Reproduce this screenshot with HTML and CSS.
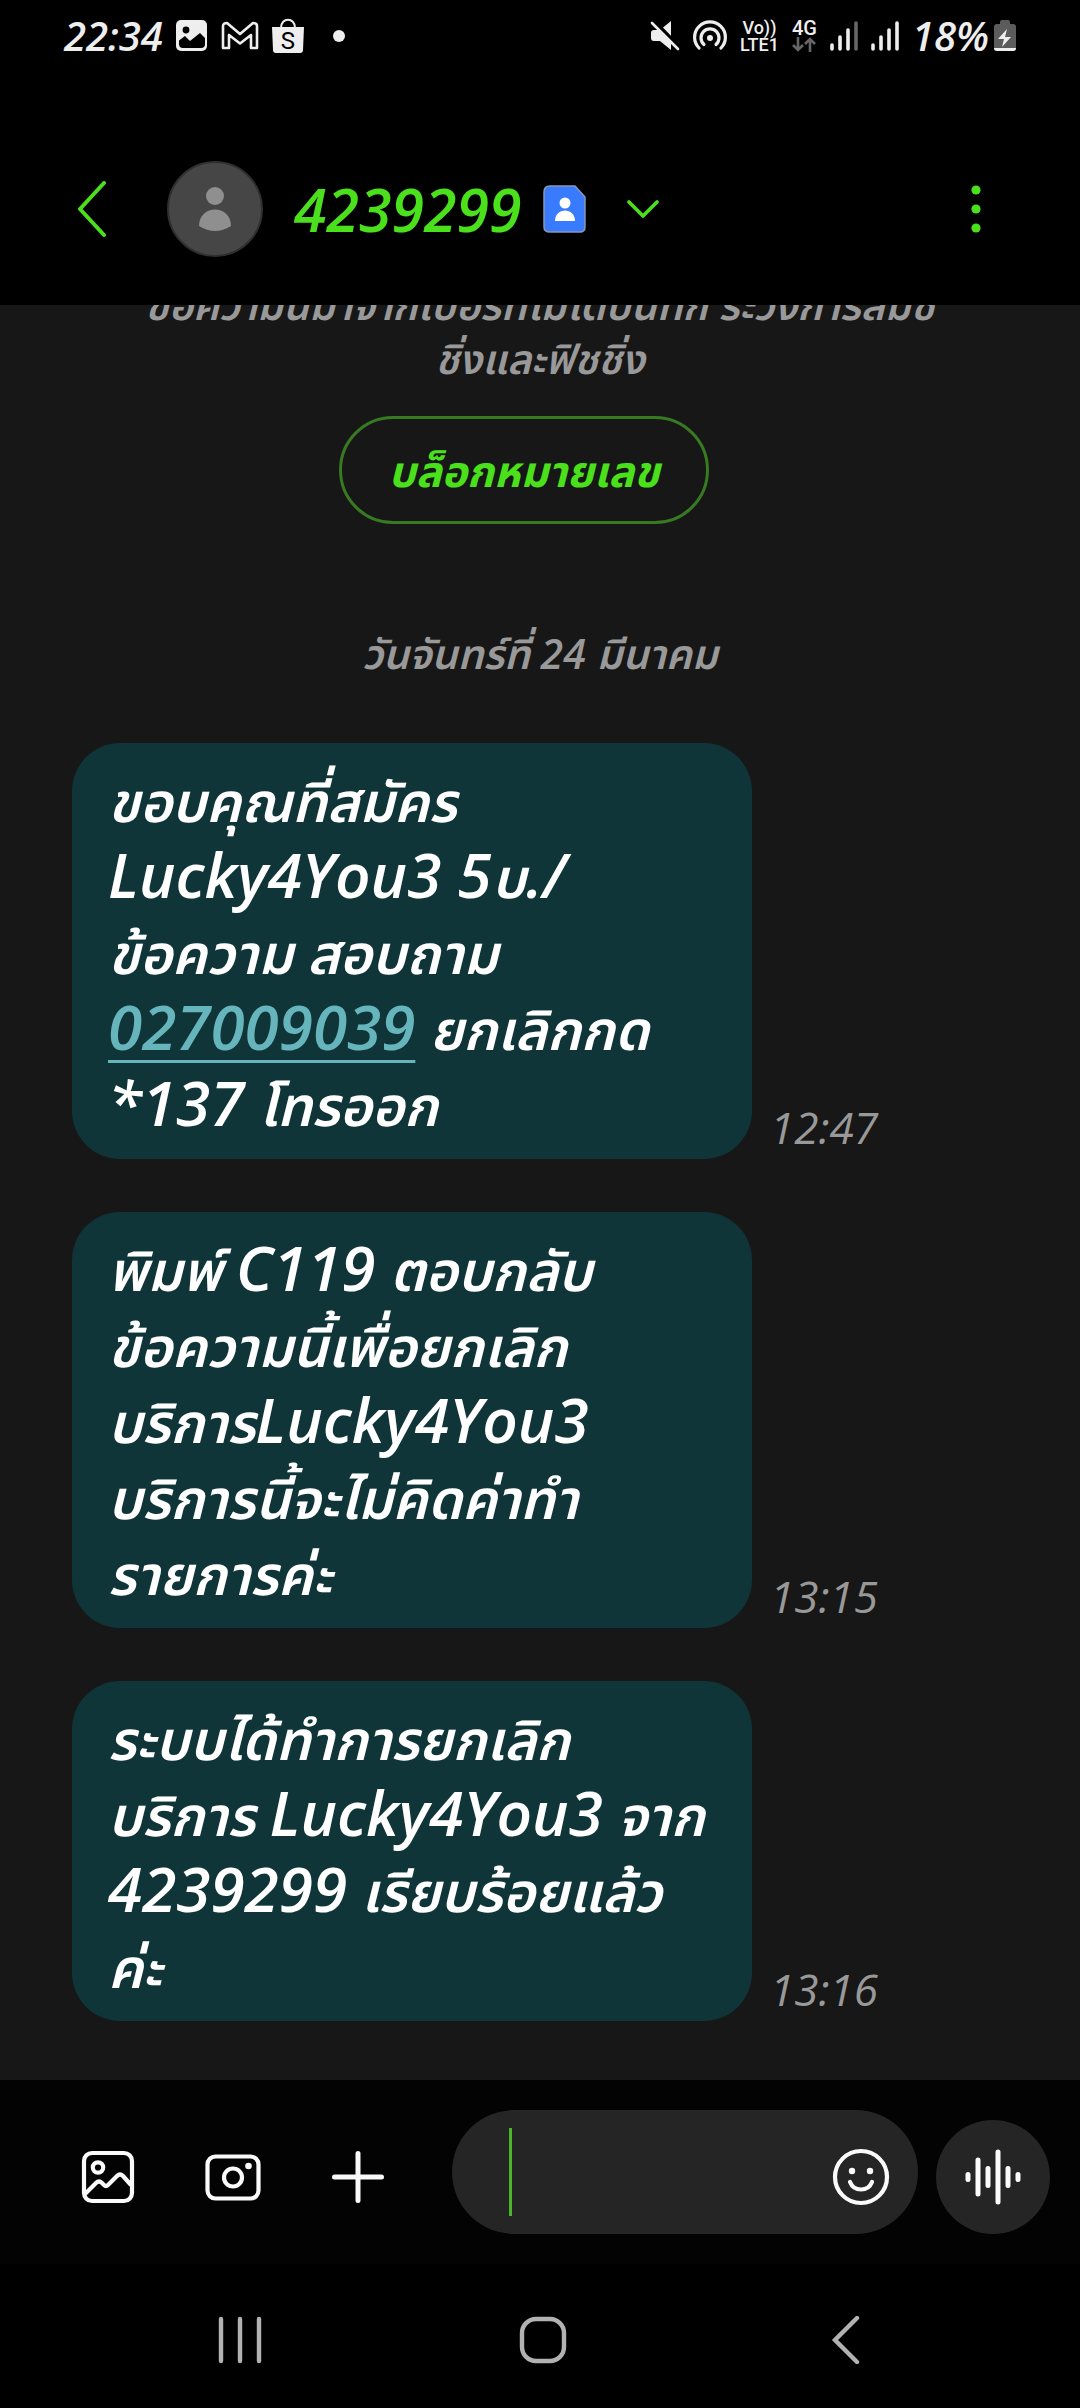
FILE: index.html
```html
<!DOCTYPE html>
<html lang="th">
<head>
<meta charset="utf-8">
<meta name="viewport" content="width=device-width, initial-scale=1">
<title>4239299</title>
<link rel="stylesheet" href="styles.css">
</head>
<body>
<div class="phone">
  <div class="status">
    <div class="status-left">
      <span class="clock">22:34</span>
      <svg class="st-image" width="32" height="32" viewBox="0 0 32 32"><rect x="0" y="0" width="31" height="31" rx="5" fill="#eee"/><circle cx="10" cy="10" r="3.4" fill="#000"/><path d="M3 20.500l6-4.500 5 5 10-8 5 5v6q0 4-4 4H7q-4 0-4-4z" fill="#000"/></svg>
      <svg class="st-mail" width="38" height="30" viewBox="0 0 38 30"><path d="M2 27V5q0-3 4-3l13 11L32 2q4 0 4 3v22h-6V14L19 22.500 8 14v13z" fill="none" stroke="#eee" stroke-width="2.600" stroke-linejoin="round"/></svg>
      <span class="bag">
        <svg width="32" height="36" viewBox="0 0 32 36"><path d="M9 10c0-11 14-11 14 0" fill="none" stroke="#eee" stroke-width="2"/><path d="M0 9h32l-1 23q0 3-3 3H4q-3 0-3-3z" fill="#eee"/></svg>
        <span class="bag-letter">S</span>
      </span>
      <svg class="st-dot" width="12" height="12" viewBox="0 0 12 12"><circle cx="6" cy="6" r="6" fill="#eee"/></svg>
    </div>
    <div class="status-right">
      <svg width="30" height="32" viewBox="0 0 30 32"><path d="M1 13q0-3 3-3h6L21 1v29L10 21H4q-3 0-3-3z" fill="#eee"/><path d="M3 0l26 27" stroke="#000" stroke-width="4"/><path d="M2 3l26 26" stroke="#eee" stroke-width="2.600" stroke-linecap="round"/></svg>
      <svg width="34" height="32" viewBox="0 0 34 32" fill="none" stroke="#eee" stroke-width="3.200" stroke-linecap="round"><path d="M6 28a15.400 15.400 0 1 1 22 0"/><path d="M11 24.500a9 9 0 1 1 12 0"/><circle cx="17" cy="18" r="3" fill="#eee" stroke="none"/></svg>
      <span class="volte"><span>Vo))</span><span>LTE1</span></span>
      <span class="network"><span>4G</span><svg width="24" height="15" viewBox="0 0 24 15" fill="none" stroke="#666" stroke-width="2.600"><path d="M6 0v13M1 8l5 5 5-5M18 15V2M13 7l5-5 5 5"/></svg></span>
      <svg width="28" height="32" viewBox="0 0 28 32" stroke="#eee" stroke-width="3.600" stroke-linecap="round"><path d="M2 25v4M10 17v12M18 10v19"/><path d="M26 3v26" stroke="#666"/></svg>
      <svg width="28" height="32" viewBox="0 0 28 32" stroke="#eee" stroke-width="3.600" stroke-linecap="round"><path d="M2 25v4M10 17v12M18 10v19M26 3v26"/></svg>
      <span class="battery"><span class="battery-text">18%</span>
      <svg width="22" height="32" viewBox="0 0 22 32"><path d="M6 4V2q0-2 2-2h6q2 0 2 2v2h3q3 0 3 3v21q0 3-3 3H3q-3 0-3-3V7q0-3 3-3z" fill="#5c5c5c"/><path d="M0 28h22q0 3-3 3H3q-3 0-3-3z" fill="#eee"/><path d="M13 9L4 19h6l-2 8 9-10h-6z" fill="#eee"/></svg></span>
    </div>
  </div>
  <header class="appbar">
    <button class="icon-btn" aria-label="ย้อนกลับ"><svg width="32" height="56" viewBox="0 0 32 56"><path d="M29 2L5 28l24 26" fill="none" stroke="#4ae01c" stroke-width="4" stroke-linecap="round" stroke-linejoin="round"/></svg></button>
    <svg class="avatar" width="96" height="96" viewBox="0 0 96 96"><circle cx="48" cy="48" r="47" fill="#464646" stroke="#2f2f2f" stroke-width="2"/><circle cx="48" cy="35" r="9" fill="#8f8f8f"/><path d="M32 65c0-22 32-22 32 0q-16 10-32 0z" fill="#8f8f8f"/></svg>
    <h1 class="title">4239299</h1>
    <svg class="card" width="44" height="48" viewBox="0 0 44 48"><path d="M7 1h25l10 11v30q0 5-5 5H7q-6 0-6-5V7q0-6 6-6z" fill="#387bff" stroke="#8a97b8" stroke-width="1.500"/><circle cx="22" cy="18" r="5.500" fill="#fff"/><path d="M12 36c0-14 20-14 20 0z" fill="#fff"/></svg>
    <button class="icon-btn expand" aria-label="รายละเอียด"><svg width="32" height="20" viewBox="0 0 32 20"><path d="M2 3l14 14L30 3" fill="none" stroke="#4ae01c" stroke-width="3.600" stroke-linecap="round" stroke-linejoin="round"/></svg></button>
    <button class="icon-btn more" aria-label="ตัวเลือกเพิ่มเติม"><svg width="12" height="48" viewBox="0 0 12 48" fill="#4ae01c"><circle cx="6" cy="5" r="4.600"/><circle cx="6" cy="24" r="4.600"/><circle cx="6" cy="43" r="4.600"/></svg></button>
  </header>
  <main class="chat">
    <p class="notice">ข้อความนี้มาจากเบอร์ที่ไม่ได้บันทึก ระวังการสมิช<br>ชิ่งและฟิชชิ่ง</p>
    <button class="block">บล็อกหมายเลข</button>
    <p class="date">วันจันทร์ที่ 24 มีนาคม</p>
    <div class="message">
      <p class="bubble">ขอบคุณที่สมัคร<br><span class="lat">Lucky4You3 5</span>บ<span class="lat">./</span><br>ข้อความ สอบถาม<br><a class="lat" href="tel:027009039">027009039</a> ยกเลิกกด<br><span class="lat">*137</span> โทรออก</p>
      <time>12:47</time>
    </div>
    <div class="message">
      <p class="bubble">พิมพ์ <span class="lat">C119</span> ตอบกลับ<br>ข้อความนี้เพื่อยกเลิก<br>บริการ<span class="lat">Lucky4You3</span><br>บริการนี้จะไม่คิดค่าทำ<br>รายการค่ะ</p>
      <time>13:15</time>
    </div>
    <div class="message">
      <p class="bubble">ระบบได้ทำการยกเลิก<br>บริการ <span class="lat">Lucky4You3</span> จาก<br><span class="lat">4239299</span> เรียบร้อยแล้ว<br>ค่ะ</p>
      <time>13:16</time>
    </div>
  </main>
  <footer class="composer">
    <div class="tools">
      <button class="icon-btn" aria-label="รูปภาพ"><svg width="56" height="56" viewBox="0 0 56 56" fill="none" stroke="#fafafa" stroke-width="4.200"><rect x="4" y="4" width="48" height="48" rx="8"/><circle cx="18" cy="18.500" r="5.200"/><path d="M5 45l11-11q3-3 6 0l2 2q2 2 4 0l9-9q3-3 6 0l8 9" stroke-linejoin="round"/></svg></button>
      <button class="icon-btn" aria-label="กล้อง"><svg width="56" height="56" viewBox="0 0 56 56" fill="none" stroke="#fafafa" stroke-width="4.200"><rect x="2.500" y="7.500" width="51" height="42" rx="8"/><circle cx="28" cy="28.500" r="9"/><circle cx="43.500" cy="17" r="3.300" fill="#fafafa" stroke="none"/></svg></button>
      <button class="icon-btn" aria-label="เพิ่ม"><svg width="56" height="56" viewBox="0 0 56 56"><path d="M28 4.500v47M4.500 28h47" stroke="#fafafa" stroke-width="5" stroke-linecap="round"/></svg></button>
    </div>
    <div class="field">
      <span class="caret"></span>
      <input type="text" aria-label="ข้อความ">
      <button class="icon-btn emoji" aria-label="อีโมจิ"><svg width="58" height="58" viewBox="0 0 58 58" fill="none" stroke="#fafafa" stroke-width="4.200" stroke-linecap="round"><circle cx="29" cy="29" r="26"/><path d="M18 34c4 10 18 10 22 0"/><circle cx="20" cy="23" r="3.200" fill="#fafafa" stroke="none"/><circle cx="38" cy="23" r="3.200" fill="#fafafa" stroke="none"/></svg></button>
    </div>
    <button class="voice" aria-label="ข้อความเสียง"><svg width="58" height="58" viewBox="0 0 58 58"><path d="M4 26.500v5M14 12v34M24 20.500v17M34 4v50M44 20.500v17M54 26.500v5" stroke="#fafafa" stroke-width="5" stroke-linecap="round"/></svg></button>
  </footer>
  <nav class="sysnav">
    <button class="icon-btn" aria-label="แอปล่าสุด"><svg width="48" height="48" viewBox="0 0 48 48"><path d="M5 3v42M24 3v42M43 3v42" stroke="#b2b2b2" stroke-width="4.400" stroke-linecap="round"/></svg></button>
    <button class="icon-btn" aria-label="หน้าหลัก"><svg width="48" height="48" viewBox="0 0 48 48"><rect x="3" y="3" width="42" height="42" rx="14" fill="none" stroke="#b2b2b2" stroke-width="4.400"/></svg></button>
    <button class="icon-btn" aria-label="กลับ"><svg width="48" height="48" viewBox="0 0 48 48"><path d="M35 2L13 24l22 22" fill="none" stroke="#b2b2b2" stroke-width="4.400" stroke-linecap="round"/></svg></button>
  </nav>
</div>
</body>
</html>
```
FILE: styles.css
```css
* { box-sizing: border-box; }
body {
  margin: 0;
  background: #000;
  color: #fff;
  font-family: "Open Sans", "Noto Sans", "Noto Sans Thai", sans-serif;
}
p, h1 { margin: 0; }
svg { display: block; flex: none; }
button {
  padding: 0;
  border: 0;
  background: none;
  color: inherit;
  font: inherit;
}
.phone { display: flex; flex-direction: column; min-height: 100vh; }

.status {
  display: flex;
  justify-content: space-between;
  align-items: center;
  height: 72px;
  padding: 0 64px;
  color: #eee;
}
.status-left, .status-right { display: flex; align-items: center; }
.status-left { gap: 13px; }
.status-right { gap: 13px; }
.clock, .battery-text { font-size: 40px; font-style: italic; font-weight: 600; line-height: 40px; }
.battery { display: flex; align-items: center; gap: 5px; }
.bag { position: relative; }
.bag-letter {
  position: absolute;
  inset: 11px 0 0;
  color: #000;
  font: 24px/24px Roboto, sans-serif;
  text-align: center;
}
.st-dot { margin-left: 16px; }
.volte, .network {
  display: flex;
  flex-direction: column;
  align-items: center;
  font-family: Roboto, sans-serif;
  font-weight: 500;
  font-size: 18px;
  line-height: 17px;
}
.network { font-size: 20px; }

.appbar {
  display: flex;
  align-items: center;
  height: 233px;
  padding: 40px 98px 0 75px;
}
.avatar { margin-left: 60px; }
.title {
  margin-left: 31px;
  color: #4ae01c;
  font-size: 59px;
  font-style: italic;
  font-weight: 600;
  line-height: 72px;
}
.card { margin-left: 22px; }
.expand { margin-left: 40px; }
.more { margin-left: auto; }

.chat {
  flex: 1;
  display: flex;
  flex-direction: column;
  padding: 0 72px 58px;
  overflow: hidden;
  background: #171717;
}
.notice, .date {
  color: #999;
  font-size: 41px;
  font-style: italic;
  font-weight: 600;
  line-height: 54px;
  text-align: center;
  white-space: nowrap;
}
.notice { margin-top: -28px; }
.block {
  align-self: center;
  height: 108px;
  margin: 31px 32px 0 0;
  padding: 6px 46px 0;
  border: 3px solid #377a21;
  border-radius: 54px;
  color: #4ae01c;
  font-size: 43px;
  font-style: italic;
  font-weight: 700;
}
.date { margin: 102px 0 63px; }
.message { display: flex; align-items: flex-end; gap: 18px; }
.message + .message { margin-top: 53px; }
.bubble {
  flex: 0 1 680px;
  padding: 20px 36px 16px;
  border-radius: 48px;
  background: #0f3538;
  font-size: 55px;
  font-style: italic;
  font-weight: 600;
  line-height: 76px;
  white-space: nowrap;
}
.lat { font-size: 62px; line-height: 60px; }
.bubble a { color: #66b5bd; text-decoration-thickness: 3px; text-underline-offset: 10px; }
time {
  color: #999;
  font-size: 44px;
  font-style: italic;
  line-height: 64px;
}

.composer {
  display: flex;
  align-items: flex-end;
  height: 184px;
  padding: 0 30px 30px 80px;
  background: #030303;
}
.tools { display: flex; align-items: center; gap: 69px; height: 114px; }
.field {
  flex: 1;
  min-width: 0;
  display: flex;
  align-items: center;
  height: 124px;
  margin: 0 18px 0 66px;
  padding: 0 28px 0 57px;
  border-radius: 62px;
  background: #252525;
}
.caret { flex: none; width: 3px; height: 88px; background: #4cb52c; }
.field input {
  flex: 1;
  min-width: 0;
  height: 88px;
  border: 0;
  outline: 0;
  background: none;
  color: #fff;
  font: inherit;
  font-size: 54px;
}
.emoji { padding-top: 10px; }
.voice {
  display: grid;
  flex: none;
  place-items: center;
  width: 114px;
  height: 114px;
  border-radius: 50%;
  background: #252525;
}
.sysnav {
  display: flex;
  justify-content: space-between;
  align-items: center;
  height: 144px;
  padding: 8px 210px 0 216px;
}
```
